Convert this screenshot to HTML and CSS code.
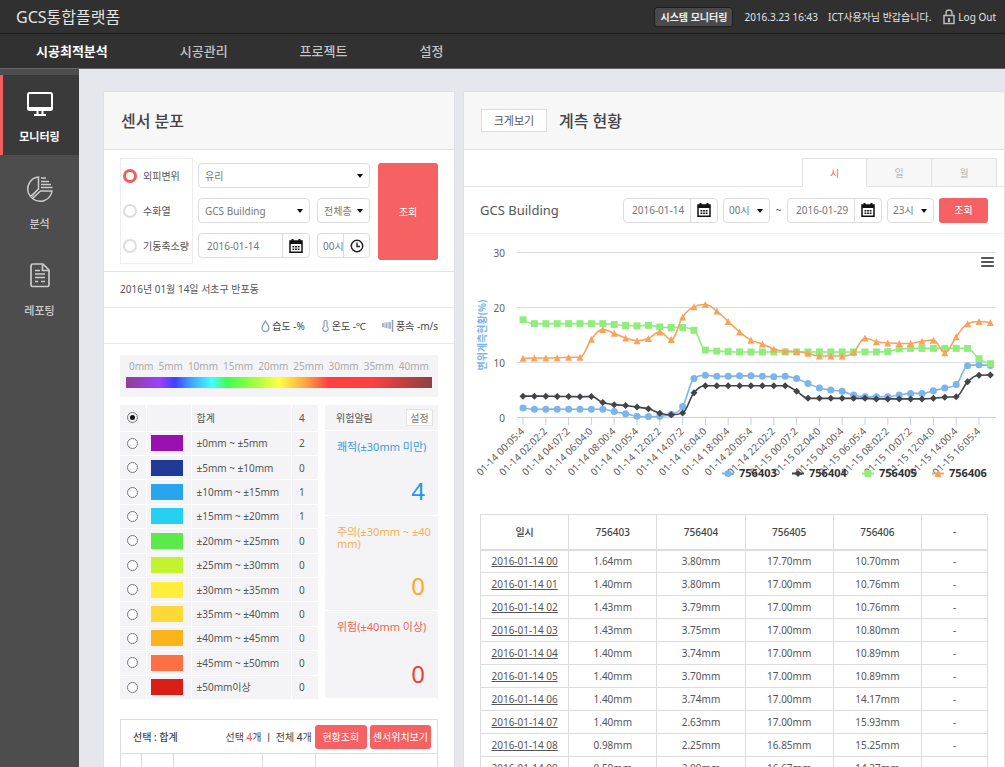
FILE: index.html
```html
<!DOCTYPE html>
<html lang="ko">
<head>
<meta charset="utf-8">
<title>GCS통합플랫폼</title>
<link rel="stylesheet" href="styles.css">
</head>
<body>
<svg class="sprite" aria-hidden="true">
  <symbol id="calendar" viewBox="0 0 14 14">
    <path d="M1 2h12v11.200H1z" fill="none" stroke="#111" stroke-width="1.500"/>
    <path d="M1 2h12v3H1z" fill="#111"/>
    <path d="M3.500 0v3M10.500 0v3" stroke="#111" stroke-width="2"/>
    <path d="M3.500 7.800h7M3.500 10.300h7" stroke="#111" stroke-width="1.500" stroke-dasharray="1.800 .8"/>
  </symbol>
  <symbol id="clock" viewBox="0 0 14 14">
    <circle cx="7" cy="7" r="5.700" fill="none" stroke="#222" stroke-width="1.500"/>
    <path d="M7 3.500V7.500H10" fill="none" stroke="#222" stroke-width="1.400"/>
  </symbol>
</svg>
<div class="app">
  <header class="topbar">
    <h1 class="brand">GCS통합플랫폼</h1>
    <button type="button" class="sys-btn">시스템 모니터링</button>
    <span class="now">2016.3.23 16:43</span>
    <span class="hello">ICT사용자님 반갑습니다.</span>
    <a class="logout" href="#"><svg width="12" height="16" viewBox="0 0 12 16" fill="none" stroke="#bbb"><path d="M1 6.500h10v8H1z" stroke-width="1.500"/><path d="M3 6V4a3 3 0 0 1 6 0v2" stroke-width="1.400"/><path d="M6 9v4" stroke-width="2"/></svg>Log Out</a>
  </header>
  <nav class="nav">
    <a class="active" href="#">시공최적분석</a><a href="#">시공관리</a><a href="#">프로젝트</a><a href="#">설정</a>
  </nav>
  <div class="body">
    <aside class="side">
      <a class="side-item active" href="#">
        <svg width="28" height="28" viewBox="0 0 28 28" fill="none" stroke="#fff" stroke-width="2"><rect x="2" y="3" width="24" height="17" rx="1.500"/><path d="M2 18h24"/><path d="M11.500 20v4M16.500 20v4M8 25h12"/></svg>
        모니터링
      </a>
      <a class="side-item" href="#">
        <svg width="28" height="28" viewBox="0 0 28 28" fill="none" stroke="#ccc" stroke-width="1.500"><path d="M12.500 2A12 12 0 0 0 4.500 21.500L12.500 14z"/><path d="M14.500 16H26A12 12 0 0 1 6.500 23.500z"/><path d="M12.500 14L5 23" stroke-width="1"/><path d="M15 3h5M15 6.500h8M15 9.500h10M15 12.500h11.500" stroke-width="1.500"/></svg>
        분석
      </a>
      <a class="side-item" href="#">
        <svg width="28" height="28" viewBox="0 0 28 28" fill="none" stroke="#ccc" stroke-width="1.700"><path d="M7 2h10l6 6V23a1.500 1.500 0 0 1-1.500 1.500h-15A1.500 1.500 0 0 1 5 23V4a2 2 0 0 1 2-2z"/><path d="M16.500 2.500v6H23"/><path d="M9 8.500h5M9 12h10M9 15.500h10M9 19.500h3M15 19.500h4" stroke-width="1.400"/></svg>
        레포팅
      </a>
    </aside>
    <main class="main">
      <section class="panel">
        <div class="panel-head"><h2>센서 분포</h2></div>
        <form class="filter">
          <div class="kinds">
            <label><input type="radio" name="kind" checked>외피변위</label>
            <label><input type="radio" name="kind">수화열</label>
            <label><input type="radio" name="kind">기동축소량</label>
          </div>
          <div class="fields">
            <span class="select wide"><select aria-label="재료"><option>유리</option></select></span>
            <span class="select"><select aria-label="건물"><option>GCS Building</option></select></span>
            <span class="select"><select aria-label="층"><option>전체층</option></select></span>
            <span class="field"><input type="text" aria-label="날짜" value="2016-01-14"><button type="button" aria-label="달력"><svg width="14" height="14"><use href="#calendar"/></svg></button></span>
            <span class="field time"><input type="text" aria-label="시간" value="00시"><button type="button" aria-label="시계"><svg width="14" height="14"><use href="#clock"/></svg></button></span>
          </div>
          <button type="button" class="primary tall">조회</button>
        </form>
        <p class="place">2016년 01월 14일 서초구 반포동</p>
        <div class="weather">
          <span><svg width="9" height="12" viewBox="0 0 9 12" fill="none" stroke="#8f9dbb" stroke-width="1.300"><path d="M4.500 1C3.500 3.500 1 5 1 8a3.500 3.500 0 0 0 7 0C8 5 5.500 3.500 4.500 1z"/></svg>습도 -%</span>
          <span><svg width="9" height="12" viewBox="0 0 9 12" fill="none" stroke="#8f9dbb" stroke-width="1.200"><path d="M3 6.500V2a1.500 1.500 0 0 1 3 0v4.500a2.700 2.700 0 1 1-3 0z"/></svg>온도 -℃</span>
          <span><svg width="12" height="12" viewBox="0 0 12 12"><path d="M0 3l9-1v7L0 7z" fill="#a9b3cb"/><path d="M3 3v4M6 3v5" stroke="#e4e8f0"/><path d="M10.500 0v12" stroke="#8f9dbb" stroke-width="1.500"/></svg>풍속 -m/s</span>
        </div>
        <div class="scale">
          <div class="ticks"><span>0mm</span><span>5mm</span><span>10mm</span><span>15mm</span><span>20mm</span><span>25mm</span><span>30mm</span><span>35mm</span><span>40mm</span></div>
          <div class="spectrum"></div>
        </div>
        <div class="summary">
          <table class="legend">
            <tr class="total"><td><input type="radio" name="range" aria-label="합계" checked></td><td></td><td>합계</td><td>4</td></tr>
            <tr><td><input type="radio" name="range" aria-label="0-5"></td><td><i class="sw c1"></i></td><td>±0mm ~ ±5mm</td><td>2</td></tr>
            <tr><td><input type="radio" name="range" aria-label="5-10"></td><td><i class="sw c2"></i></td><td>±5mm ~ ±10mm</td><td>0</td></tr>
            <tr><td><input type="radio" name="range" aria-label="10-15"></td><td><i class="sw c3"></i></td><td>±10mm ~ ±15mm</td><td>1</td></tr>
            <tr><td><input type="radio" name="range" aria-label="15-20"></td><td><i class="sw c4"></i></td><td>±15mm ~ ±20mm</td><td>1</td></tr>
            <tr><td><input type="radio" name="range" aria-label="20-25"></td><td><i class="sw c5"></i></td><td>±20mm ~ ±25mm</td><td>0</td></tr>
            <tr><td><input type="radio" name="range" aria-label="25-30"></td><td><i class="sw c6"></i></td><td>±25mm ~ ±30mm</td><td>0</td></tr>
            <tr><td><input type="radio" name="range" aria-label="30-35"></td><td><i class="sw c7"></i></td><td>±30mm ~ ±35mm</td><td>0</td></tr>
            <tr><td><input type="radio" name="range" aria-label="35-40"></td><td><i class="sw c8"></i></td><td>±35mm ~ ±40mm</td><td>0</td></tr>
            <tr><td><input type="radio" name="range" aria-label="40-45"></td><td><i class="sw c9"></i></td><td>±40mm ~ ±45mm</td><td>0</td></tr>
            <tr><td><input type="radio" name="range" aria-label="45-50"></td><td><i class="sw c10"></i></td><td>±45mm ~ ±50mm</td><td>0</td></tr>
            <tr><td><input type="radio" name="range" aria-label="50"></td><td><i class="sw c11"></i></td><td>±50mm이상</td><td>0</td></tr>
          </table>
          <div class="alerts">
            <div class="alerts-head">위험알림<button type="button">설정</button></div>
            <div class="alert ok"><span>쾌적(±30mm 미만)</span><b>4</b></div>
            <div class="alert warn"><span>주의(±30mm ~ ±40mm)</span><b>0</b></div>
            <div class="alert danger"><span>위험(±40mm 이상)</span><b>0</b></div>
          </div>
        </div>
        <div class="picked">
          <div class="picked-head">
            <strong>선택 : 합계</strong>
            <span class="count">선택 <em>4</em>개 <i>ㅣ</i> 전체 <b>4</b>개</span>
            <button type="button" class="primary">현황조회</button>
            <button type="button" class="primary">센서위치보기</button>
          </div>
          <div class="picked-cols"><span></span><span></span><span></span><span></span><span></span></div>
        </div>
      </section>

      <section class="panel">
        <div class="panel-head"><button type="button" class="zoom-btn">크게보기</button><h2>계측 현황</h2></div>
        <div class="tabs"><button type="button" class="active">시</button><button type="button">일</button><button type="button">월</button></div>
        <form class="toolbar">
          <h3>GCS Building</h3>
          <span class="field"><input type="text" aria-label="시작일" value="2016-01-14"><button type="button" aria-label="달력"><svg width="14" height="14"><use href="#calendar"/></svg></button></span>
          <span class="select"><select aria-label="시작 시간"><option>00시</option></select></span>
          <span class="tilde">~</span>
          <span class="field"><input type="text" aria-label="종료일" value="2016-01-29"><button type="button" aria-label="달력"><svg width="14" height="14"><use href="#calendar"/></svg></button></span>
          <span class="select"><select aria-label="종료 시간"><option>23시</option></select></span>
          <button type="button" class="primary">조회</button>
        </form>
        <svg class="chart" id="chart" viewBox="0 0 540 280" role="img" aria-label="변위계측현황"></svg>
        <table class="data">
          <thead><tr><th>일시</th><th>756403</th><th>756404</th><th>756405</th><th>756406</th><th>-</th></tr></thead>
          <tbody>
            <tr><td><a href="#">2016-01-14 00</a></td><td>1.64mm</td><td>3.80mm</td><td>17.70mm</td><td>10.70mm</td><td>-</td></tr>
            <tr><td><a href="#">2016-01-14 01</a></td><td>1.40mm</td><td>3.80mm</td><td>17.00mm</td><td>10.76mm</td><td>-</td></tr>
            <tr><td><a href="#">2016-01-14 02</a></td><td>1.43mm</td><td>3.79mm</td><td>17.00mm</td><td>10.76mm</td><td>-</td></tr>
            <tr><td><a href="#">2016-01-14 03</a></td><td>1.43mm</td><td>3.75mm</td><td>17.00mm</td><td>10.80mm</td><td>-</td></tr>
            <tr><td><a href="#">2016-01-14 04</a></td><td>1.40mm</td><td>3.74mm</td><td>17.00mm</td><td>10.89mm</td><td>-</td></tr>
            <tr><td><a href="#">2016-01-14 05</a></td><td>1.40mm</td><td>3.70mm</td><td>17.00mm</td><td>10.89mm</td><td>-</td></tr>
            <tr><td><a href="#">2016-01-14 06</a></td><td>1.40mm</td><td>3.74mm</td><td>17.00mm</td><td>14.17mm</td><td>-</td></tr>
            <tr><td><a href="#">2016-01-14 07</a></td><td>1.40mm</td><td>2.63mm</td><td>17.00mm</td><td>15.93mm</td><td>-</td></tr>
            <tr><td><a href="#">2016-01-14 08</a></td><td>0.98mm</td><td>2.25mm</td><td>16.85mm</td><td>15.25mm</td><td>-</td></tr>
            <tr><td><a href="#">2016-01-14 09</a></td><td>0.59mm</td><td>2.09mm</td><td>16.67mm</td><td>14.37mm</td><td>-</td></tr>
          </tbody>
        </table>
      </section>
    </main>
  </div>
</div>
<script src="chart.js"></script>
</body>
</html>
```

FILE: styles.css
```css
* { box-sizing: border-box; }
body {
  margin: 0;
  font: 10px/14px "Noto Sans", "Noto Sans CJK KR", sans-serif;
  color: #555;
  background: #e5e7ed;
}
h1, h2, h3, p { margin: 0; font-weight: 400; }
a { color: inherit; text-decoration: none; }
button, input, select { font: inherit; color: inherit; margin: 0; padding: 0; border: 0; background: none; }
button { cursor: pointer; white-space: nowrap; }
.sprite { display: none; }

.app { display: flex; flex-direction: column; height: 100vh; overflow: hidden; }
.topbar {
  flex: none; display: flex; align-items: center; height: 34px; padding: 0 9px 0 16px;
  background: #303030; border-bottom: 1px solid #1c1c1c; color: #e4e4e4;
}
.brand { margin-right: auto; font-size: 16px; line-height: 24px; }
.sys-btn { height: 20px; width: 79px; margin-right: 11px; background: #4a4a4a; border: 1px solid #1d1d1d; border-radius: 3px; font-weight: 700; color: #eee; }
.now { margin-right: 10px; }
.hello { margin-right: 12px; }
.logout { display: flex; align-items: center; gap: 3px; }
.nav {
  flex: none; display: flex; align-items: center; gap: 72px; height: 35px; padding-left: 36px;
  background: #313131; border-bottom: 1px solid #666; font-size: 13px; color: #c4c4c4; font-weight: 500;
}
.nav .active { color: #fff; font-weight: 700; }

.body { flex: 1; display: flex; min-height: 0; }
.side { flex: none; width: 79px; padding-top: 6px; background: #4d4d4d; }
.side-item {
  display: flex; flex-direction: column; align-items: center; gap: 14px; height: 87px; padding-top: 20px;
  font-size: 11px; font-weight: 500; color: #ccc;
}
.side-item.active { height: 80px; padding-top: 15px; gap: 12px; background: #3a3a3a; box-shadow: inset 3px 0 #f55e60; color: #fff; font-weight: 700; }

.main { flex: 1; display: grid; grid-template-columns: 350fr 540fr; gap: 10px; padding: 23px 1px 0 25px; min-width: 0; }
.panel { background: #fff; min-width: 0; box-shadow: 0 0 0 1px #dfe1e6; }
.panel-head { display: flex; align-items: center; gap: 12px; height: 58px; padding: 0 17px; background: #f7f7f7; border-bottom: 1px solid #dcdfe2; }
.panel-head h2 { font-size: 16px; line-height: 24px; font-weight: 500; color: #444; }
.zoom-btn { width: 66px; height: 23px; border: 1px solid #ddd; background: #fff; font-size: 11px; }

.primary { height: 25px; border-radius: 3px; background: #f66263; color: #fff; }

.filter { display: flex; padding: 8px 16px; height: 122px; border-bottom: 1px solid #dfe6ea; }
.kinds { flex: none; width: 73px; height: 106px; padding: 0 2px; border: 1px solid #eee; display: flex; flex-direction: column; justify-content: space-around; white-space: nowrap; }
.kinds label { display: flex; align-items: center; gap: 6px; }
.kinds input { flex: none; appearance: none; width: 14px; height: 14px; border: 2px solid #ddd; border-radius: 50%; }
.kinds input:checked { border: 3px solid #ee5f5c; }
.fields { flex: 1; display: grid; grid-template-columns: 1fr 53px; gap: 10px 7px; align-content: start; padding: 5px 8px 0 5px; }
.wide { grid-column: span 2; }
.tall { width: 60px; height: 97px; margin-top: 5px; }
.select, .field { display: flex; height: 25px; border: 1px solid #ddd; border-radius: 4px; background: #fff; color: #777; min-width: 0; }
.select { position: relative; }
.select select { appearance: none; width: 100%; padding-left: 6px; }
.select::after { content: ""; position: absolute; right: 6px; top: 10px; border: 3px solid transparent; border-top: 4px solid #111; border-bottom: 0; pointer-events: none; }
.field input { flex: 1; min-width: 0; width: 0; padding-left: 8px; }
.field button { flex: none; width: 27px; border-left: 1px solid #ddd; display: flex; align-items: center; justify-content: center; }
.time input { padding-left: 5px; }
.time button { width: 26px; }

.place { height: 36px; padding: 0 16px; line-height: 35px; border-bottom: 1px solid #e4eaec; }
.weather { display: flex; justify-content: flex-end; gap: 16px; height: 36px; padding: 0 16px; border-bottom: 1px solid #e4eaec; color: #444; }
.weather span { display: flex; align-items: center; gap: 2px; }

.scale { margin: 11px 16px 8px; height: 42px; padding: 4px 6px 0; background: #f4f4f6; color: #aaa; }
.ticks { display: flex; justify-content: space-between; padding: 0 3px; line-height: 14px; }
.spectrum { height: 11px; margin-top: 4px; background: linear-gradient(90deg, #904090, #9b40ff 11%, #4040ff 16%, #40a0ff 21%, #40ffff 28%, #40ff50 33%, #a0ff40 42%, #ffff40 50%, #ffa040 59%, #ff4040 66%, #ff4040 80%, #904040); }

.summary { display: grid; grid-template-columns: 1fr 113px; gap: 6px; margin: 0 16px 19px; height: 295px; }
.legend { width: 100%; height: 295px; border-collapse: collapse; }
.legend td { padding: 0; background: #f4f4f6; border-bottom: 1px solid #fff; border-right: 1px solid #fff; }
.legend .total td { height: 26px; }
.legend td:nth-child(1) { width: 26px; text-align: center; }
.legend td:nth-child(2) { width: 45px; padding-left: 4px; }
.legend td:nth-child(3) { padding-left: 5px; }
.legend td:nth-child(4) { width: 27px; padding-left: 7px; }
.legend input { display: block; appearance: none; width: 11px; height: 11px; margin: 0 auto; border: 1px solid #777; border-radius: 50%; background: #fff; }
.legend input:checked { padding: 2px; background: #111 content-box; }
.sw { display: block; width: 32px; height: 16px; }
.c1 { background: #9a10b0; } .c2 { background: #1e3a96; } .c3 { background: #27a5ee; } .c4 { background: #27d0ee; }
.c5 { background: #5ce94a; } .c6 { background: #c3f22f; } .c7 { background: #ffee3b; } .c8 { background: #ffd737; }
.c9 { background: #fcb41a; } .c10 { background: #fe7043; } .c11 { background: #da1d15; }
.alerts { display: grid; grid-template-rows: 25px 84px 94px 1fr; gap: 1px; padding-bottom: 2px; }
.alerts > div { background: #f4f4f6; }
.alerts-head { display: flex; align-items: center; justify-content: space-between; padding: 0 5px 0 11px; }
.alerts-head button { width: 27px; height: 17px; border: 1px solid #e3e3e6; background: #fff; color: #777; }
.alert { display: flex; flex-direction: column; justify-content: space-between; padding: 10px 1px 10px 12px; font-size: 11px; line-height: 12px; word-break: break-all; }
.alert b { align-self: flex-end; margin-right: 12px; font-size: 24px; line-height: 28px; font-weight: 400; }
.ok { color: #3a9bd9; } .ok b { color: #2196ee; }
.warn { color: #f2b04e; } .warn b { color: #fbaa20; }
.danger { color: #ea6453; } .danger b { color: #f1402c; }

.picked { margin: 0 16px; border: 1px solid #ddd; }
.picked-head { display: flex; align-items: center; gap: 3px; height: 34px; padding: 0 6px 0 12px; color: #444; border-bottom: 1px solid #ddd; white-space: nowrap; }
.picked-head strong { margin-right: auto; font-weight: 500; }
.picked-head em, .picked-head i { font-style: normal; }
.picked-head em { color: #f0544f; }
.picked-head b { font-weight: 500; }
.picked-head .primary { padding: 0 3px; min-width: 52px; height: 24px; }
.picked-cols { display: grid; grid-template-columns: 21px 32px 89px 53px 1fr; height: 40px; }
.picked-cols span { border-right: 1px solid #ddd; }
.picked-cols span:last-child { border: 0; }

.tabs { display: flex; justify-content: flex-end; height: 37px; padding: 8px 7px 0 0; border-bottom: 1px solid #e3e3e3; }
.tabs button { width: 65px; height: 29px; border: 1px solid #e3e3e3; border-left: 0; background: #f7f7f7; color: #b5b5b5; }
.tabs .active { border-left: 1px solid #e3e3e3; background: #fff; border-bottom-color: #fff; color: #ef5e59; }
.toolbar { display: flex; align-items: center; gap: 5px; height: 47px; padding: 0 16px; border-bottom: 1px solid #eee; }
.toolbar h3 { margin-right: auto; font-size: 13px; line-height: 18px; }
.toolbar .field { width: 95px; }
.toolbar .select { width: 47px; }
.toolbar .select select { padding-left: 5px; }
.toolbar .primary { width: 49px; }
.tilde { width: 7px; text-align: center; }

.chart { display: block; width: 100%; }
.chart text { font-size: 10px; fill: #606060; }
.chart .axis-title { font-size: 10px; font-weight: 700; fill: #7cb5ec; }
.chart .key { font-size: 11px; font-weight: 700; fill: #333; }

.data { width: calc(100% - 32px); margin: 0 16px; border-collapse: collapse; table-layout: fixed; text-align: center; }
.data th, .data td { padding: 0; height: 23px; border: 1px solid #ddd; }
.data th { height: 35px; font-weight: 500; color: #444; border-bottom-width: 2px; }
.data th:last-child { width: 66px; }
.data a { text-decoration: underline; }
```

FILE: chart.js
```js
(function () {
  var NS = 'http://www.w3.org/2000/svg';
  var svg = document.getElementById('chart');
  var X0 = 59, STEP = 11.4, Y0 = 183, UNIT = 5.49, LEFT = 53, RIGHT = 532;
  var series = [
    { name: '756403', color: '#7cb5ec', shape: 'circle', data: [1.64, 1.4, 1.43, 1.43, 1.4, 1.4, 1.4, 1.4, .98, .59, .15, .1, .15, .5, 1.9, 7, 7.6, 7.4, 7.4, 7.5, 7.5, 7.4, 7.35, 7.4, 7, 6.1, 5.3, 4.9, 4.7, 4, 3.7, 3.7, 3.7, 4, 4.3, 4.3, 4.8, 5.3, 5.9, 9.35, 9.5, 9.4] },
    { name: '756404', color: '#434348', shape: 'diamond', data: [3.8, 3.8, 3.79, 3.75, 3.74, 3.7, 3.74, 2.63, 2.25, 2.09, 1.8, 1.5, .7, .4, .75, 4.4, 5.7, 5.7, 5.7, 5.7, 5.7, 5.7, 5.7, 5.7, 4.7, 3.4, 3.4, 3.4, 3.4, 3.4, 3.4, 3.3, 3.3, 3.3, 3.3, 3.3, 3.4, 3.6, 3.7, 6.4, 7.6, 7.65] },
    { name: '756405', color: '#90ed7d', shape: 'square', data: [17.7, 17, 17, 17, 17, 17, 17, 17, 16.85, 16.67, 16.6, 16.7, 16.4, 16.3, 16.3, 15.8, 12.2, 12, 11.9, 11.85, 11.85, 11.85, 11.85, 11.85, 11.85, 11.85, 11.85, 11.85, 11.85, 11.85, 11.85, 11.85, 11.9, 12.4, 12.5, 12.5, 12.5, 12.5, 12.5, 12.5, 10.6, 9.7] },
    { name: '756406', color: '#f7a35c', shape: 'triangle', data: [10.7, 10.76, 10.76, 10.8, 10.89, 10.89, 14.17, 15.93, 15.25, 14.37, 13.9, 14.3, 15.5, 14.1, 18.2, 20.1, 20.5, 19.3, 17.4, 15.5, 14, 13.3, 12.4, 12, 11.95, 11.6, 11.1, 11.1, 11.1, 11.8, 14.4, 13.7, 13.5, 13.4, 13.4, 13.8, 14, 11.7, 14.6, 17, 17.4, 17.2] }
  ];
  var minutes = ['05:4', '02:2', '07:2', '04:0', '00:4'];

  function add(tag, attrs, text) {
    var el = document.createElementNS(NS, tag);
    for (var k in attrs) el.setAttribute(k, attrs[k]);
    if (text) el.textContent = text;
    svg.appendChild(el);
  }
  function marker(shape, x, y, color) {
    var r = 3.5;
    if (shape === 'circle') return add('circle', { cx: x, cy: y, r: r, fill: color });
    var d = {
      diamond: [[0, -r], [r, 0], [0, r], [-r, 0]],
      square: [[-r, -r], [r, -r], [r, r], [-r, r]],
      triangle: [[0, -r], [r, r], [-r, r]]
    }[shape];
    add('polygon', { points: d.map(function (p) { return (x + p[0]) + ',' + (y + p[1]); }).join(' '), fill: color });
  }
  // Smooth curve whose control points never overshoot the neighbouring values
  function spline(pts) {
    var path = 'M' + pts[0].x + ' ' + pts[0].y;
    var out = pts[0];
    for (var i = 1; i < pts.length; i++) {
      var a = pts[i - 1], p = pts[i], n = pts[i + 1], l = p, r = p;
      if (n) {
        l = { x: (1.5 * p.x + a.x) / 2.5, y: (1.5 * p.y + a.y) / 2.5 };
        r = { x: (1.5 * p.x + n.x) / 2.5, y: (1.5 * p.y + n.y) / 2.5 };
        var c = (r.y - l.y) * (r.x - p.x) / (r.x - l.x) + p.y - r.y;
        l.y += c; r.y += c;
        var hi = Math.max(a.y, p.y), lo = Math.min(a.y, p.y);
        if (l.y > hi || l.y < lo) { l.y = l.y > hi ? hi : lo; r.y = 2 * p.y - l.y; }
        hi = Math.max(n.y, p.y); lo = Math.min(n.y, p.y);
        if (r.y > hi || r.y < lo) { r.y = r.y > hi ? hi : lo; l.y = 2 * p.y - r.y; }
      }
      path += 'C' + [out.x, out.y, l.x, l.y, p.x, p.y].join(' ');
      out = r;
    }
    return path;
  }

  [0, 10, 20, 30].forEach(function (v) {
    var y = Math.round(Y0 - v * UNIT) + .5;
    add('path', { d: 'M' + LEFT + ' ' + y + 'H' + RIGHT, stroke: v ? '#d8dce0' : '#c0d0e0' });
    add('text', { x: 41, y: y + 4, 'text-anchor': 'end' }, String(v));
  });
  add('text', { 'class': 'axis-title', transform: 'translate(22 101) rotate(-90)', 'text-anchor': 'middle' }, '변위계측현황(%)');

  for (var i = 0; i < 21; i++) {
    var x = X0 + i * 2 * STEP, hour = i * 2 % 24;
    add('path', { d: 'M' + x + ' ' + Y0 + 'v8', stroke: '#c0d0e0' });
    add('text', { transform: 'translate(' + (x + 2) + ' ' + (Y0 + 15) + ') rotate(-45)', 'text-anchor': 'end' },
      (i < 12 ? '01-14 ' : '01-15 ') + (hour < 10 ? '0' : '') + hour + ':' + minutes[i % 5]);
  }
  series.forEach(function (s) {
    var pts = s.data.map(function (v, k) { return { x: X0 + k * STEP, y: Y0 - v * UNIT }; });
    add('path', { d: spline(pts), fill: 'none', stroke: s.color, 'stroke-width': 1.6 });
    pts.forEach(function (p) { marker(s.shape, p.x, p.y, s.color); });
  });
  series.forEach(function (s, k) {
    var x = 264 + k * 70;
    add('path', { d: 'M' + (x - 6) + ' 239.5h12', stroke: s.color, 'stroke-width': 2 });
    marker(s.shape, x, 239.5, s.color);
    add('text', { 'class': 'key', x: x + 11, y: 243 }, s.name);
  });
  add('path', { d: 'M518 24h11M518 28h11M518 32h11', stroke: '#555', 'stroke-width': 2, 'stroke-linecap': 'round' });
})();
```
